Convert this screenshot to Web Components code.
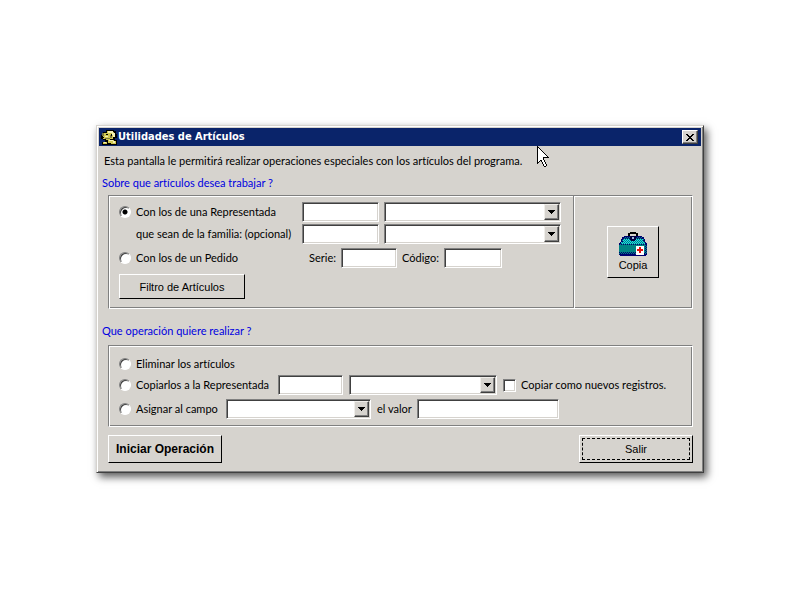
<!DOCTYPE html>
<html lang="es">
<head>
<meta charset="utf-8">
<title>Utilidades de Artículos</title>
<style>
    body {
        box-sizing: border-box;
        margin: 0;
        padding-bottom: 2px;
        min-height: 100vh;
        display: flex;
        align-items: center;
        justify-content: center;
        background: #fff;
        font: 11px/14px Lato, "DejaVu Sans Condensed", sans-serif;
        font-variant-ligatures: none;
        color: #000;
    }
</style>
</head>
<body>
<articulos-app></articulos-app>

<script>
function define (name, html, setup) {
    const template = document.createElement('template')
    template.innerHTML = html
    customElements.define(name, class extends HTMLElement {
        constructor () {
            super()
            this.attachShadow({ mode: 'open' })
            this.shadowRoot.appendChild(template.content.cloneNode(true))
        }

        connectedCallback () {
            if (setup) setup(this, this.shadowRoot)
        }
    })
}

define('win-window', `
    <style>
        :host {
            display: block;
            position: relative;
            box-sizing: border-box;
            width: 100%;
            max-width: 608px;
            background: #d6d3ce;
            border: 1px solid #d6d3ce;
            border-right-color: #404040;
            border-bottom-color: #404040;
            padding: 2px;
            box-shadow: inset 1px 1px #fff, inset -1px -1px #808080, 3px 4px 8px rgba(0, 0, 0, .65);
        }

        .title {
            display: flex;
            align-items: center;
            gap: 1px;
            height: 18px;
            padding: 0 3px 0 2px;
            background: #0a246a;
            color: #fff;
            font-family: "DejaVu Sans Condensed", "DejaVu Sans", sans-serif;
            font-weight: bold;
        }

        h1 {
            flex: 1;
            margin: 0;
            font-size: 11px;
        }

        .close {
            display: flex;
            align-items: center;
            justify-content: center;
            width: 16px;
            height: 14px;
            padding: 0;
            background: #d6d3ce;
            border: 1px solid #fff;
            border-right-color: #404040;
            border-bottom-color: #404040;
            box-shadow: inset -1px -1px #808080;
        }

        .body {
            padding: 8px 8px 7px 7px;
        }
    </style>
    <div class="title">
        <svg width="16" height="16" viewBox="0 0 16 16" shape-rendering="crispEdges" aria-hidden="true">
            <path fill="#000" d="M2 3h3v-2h8v1h2v3h1v4h-2v2h2v5h-15v-3h3v-2h-2v-1h-2v-4h2z"/>
            <path fill="#d0c850" d="M6 2h6v1h1v5h-1v2h-3v1h-4v-1h-3v-3h1v-3h3z"/>
            <path fill="#f4f0b8" d="M7 2h5v2h-5zM11 4h3v4h-2v-2h-1zM4 7h3v1h-3z"/>
            <path fill="#7c7840" d="M1 4h2v3h-2zM9 6h2v3h-2zM4 9h5v1h-5z"/>
            <path fill="#000" d="M5 5h2v1h-2zM1 8h2v1h-2zM10 5h1v2h-1z"/>
            <path fill="#d0c850" d="M7 11h6v1h2v3h-5v-1h-3zM2 13h4v2h-4z"/>
            <path fill="#f4f0b8" d="M8 11h4v1h-4zM12 12h2v2h-2zM3 13h2v1h-2z"/>
        </svg>
        <h1><slot name="title"></slot></h1>
        <button class="close" aria-label="Cerrar">
            <svg width="8" height="7" viewBox="0 0 8 7" shape-rendering="crispEdges">
                <path d="M0 0h2v1h1v1h2v-1h1v-1h2v1h-1v1h-1v1h-1v1h1v1h1v1h1v1h-2v-1h-1v-1h-2v1h-1v1h-2v-1h1v-1h1v-1h1v-1h-1v-1h-1v-1h-1z"/>
            </svg>
        </button>
    </div>
    <div class="body"><slot></slot></div>
`)

define('win-panel', `
    <style>
        :host {
            display: flex;
            border: 1px solid #808080;
            border-right-color: #fff;
            border-bottom-color: #fff;
            box-shadow: inset 1px 1px #fff, inset -1px -1px #808080;
        }
    </style>
    <slot></slot>
`, host => {
    // each radio lives in its own shadow root, so the panel keeps them exclusive
    host.addEventListener('pick', event => {
        host.querySelectorAll('win-radio').forEach(radio => {
            if (radio !== event.target) radio.shadowRoot.querySelector('input').checked = false
        })
    })
})

define('win-radio', `
    <style>
        :host {
            display: block;
        }

        label {
            display: flex;
            align-items: center;
            gap: 5px;
            white-space: nowrap;
        }

        input {
            appearance: none;
            box-sizing: border-box;
            flex: none;
            width: 12px;
            height: 12px;
            margin: 0;
            border: 1px solid;
            border-color: #808080 #fff #fff #808080;
            border-radius: 50%;
            background: #fff;
            box-shadow: inset 1px 1px #404040;
        }

        input:checked {
            background: radial-gradient(circle at 50% 50%, #000 2px, #fff 3px);
        }
    </style>
    <label><input type="radio"><span><slot></slot></span></label>
`, (host, root) => {
    const input = root.querySelector('input')
    input.checked = host.hasAttribute('checked')
    input.addEventListener('change', () => {
        host.dispatchEvent(new Event('pick', { bubbles: true, composed: true }))
    })
})

define('win-check', `
    <style>
        :host {
            display: block;
        }

        label {
            display: flex;
            align-items: center;
            gap: 5px;
            white-space: nowrap;
        }

        input {
            appearance: none;
            box-sizing: border-box;
            flex: none;
            width: 13px;
            height: 13px;
            margin: 0;
            border: 1px solid;
            border-color: #808080 #fff #fff #808080;
            background: #fff;
            box-shadow: inset 1px 1px #404040, inset -1px -1px #d6d3ce;
        }

        input:checked {
            background: linear-gradient(#000, #000) center / 5px 5px no-repeat #fff;
        }
    </style>
    <label><input type="checkbox"><span><slot></slot></span></label>
`)

define('win-field', `
    <style>
        :host {
            display: block;
        }

        label {
            display: flex;
            align-items: center;
            gap: 5px;
            white-space: nowrap;
        }

        input {
            box-sizing: border-box;
            flex: 1;
            min-width: 0;
            height: 20px;
            margin: 0;
            padding: 2px 4px;
            border: 1px solid;
            border-color: #808080 #fff #fff #808080;
            border-radius: 0;
            background: #fff;
            box-shadow: inset 1px 1px #404040, inset -1px -1px #d6d3ce;
            font: inherit;
            outline: none;
        }
    </style>
    <label><slot></slot><input type="text"></label>
`, (host, root) => {
    if (host.hasAttribute('name')) root.querySelector('input').setAttribute('aria-label', host.getAttribute('name'))
})

define('win-combo', `
    <style>
        :host {
            display: block;
            position: relative;
        }

        select {
            appearance: none;
            display: block;
            box-sizing: border-box;
            width: 100%;
            height: 20px;
            margin: 0;
            padding: 2px 18px 2px 4px;
            border: 1px solid;
            border-color: #808080 #fff #fff #808080;
            border-radius: 0;
            background: #fff;
            box-shadow: inset 1px 1px #404040, inset -1px -1px #d6d3ce;
            font: inherit;
            outline: none;
        }

        .arrow {
            position: absolute;
            top: 2px;
            right: 2px;
            bottom: 2px;
            width: 15px;
            box-sizing: border-box;
            display: flex;
            align-items: center;
            justify-content: center;
            background: #d6d3ce;
            border: 1px solid #f0eeea;
            border-right-color: #404040;
            border-bottom-color: #404040;
            box-shadow: inset -1px -1px #808080;
            pointer-events: none;
        }
    </style>
    <select><option></option></select>
    <span class="arrow">
        <svg width="7" height="4" viewBox="0 0 7 4" shape-rendering="crispEdges"><path d="M0 0h7v1h-1v1h-1v1h-1v1h-1v-1h-1v-1h-1v-1h-1z"/></svg>
    </span>
`, (host, root) => {
    root.querySelector('select').setAttribute('aria-label', host.getAttribute('name'))
})

define('win-button', `
    <style>
        :host {
            display: block;
            font-family: "Liberation Sans", Arial, sans-serif;
        }

        button {
            display: flex;
            flex-direction: column;
            align-items: center;
            justify-content: center;
            gap: 2px;
            box-sizing: border-box;
            width: 100%;
            height: var(--button-height, 28px);
            margin: 0;
            padding: 2px;
            background: #d6d3ce;
            border: 1px solid #fff;
            border-right-color: #000;
            border-bottom-color: #000;
            color: inherit;
            font: inherit;
        }

        button:active {
            border-color: #000 #fff #fff #000;
        }

        :host([focused]) button {
            outline: 1px dashed #000;
            outline-offset: -4px;
        }
    </style>
    <button><slot></slot></button>
`)

define('first-aid-icon', `
    <style>
        :host {
            display: block;
            height: 24px;
        }
    </style>
    <svg width="28" height="24" viewBox="0 0 28 24" shape-rendering="crispEdges" aria-hidden="true">
        <defs>
            <pattern id="dots" width="2" height="2" patternUnits="userSpaceOnUse">
                <path fill="#008484" d="M0 0h2v2h-2z"/>
                <path fill="#20d8e8" d="M0 0h1v1h-1zM1 1h1v1h-1z"/>
            </pattern>
            <pattern id="dark" width="2" height="2" patternUnits="userSpaceOnUse">
                <path fill="#008484" d="M0 0h2v2h-2z"/>
                <path fill="#000070" d="M0 0h1v1h-1zM1 1h1v1h-1z"/>
            </pattern>
        </defs>
        <path fill="#000" d="M11 0h6v1h2v4h-2v-3h-6v3h-2v-4h2z"/>
        <path fill="#000070" d="M5 4h18v1h2v2h1v3h1v1h1v12h-1v1h-26v-1h-1v-12h1v-1h1v-3h1v-2h2z"/>
        <path fill="url(#dark)" d="M5 5h18v2h2v3h-22v-3h2z"/>
        <path fill="url(#dots)" d="M4 7h20v3h2v2h-24v-2h2z"/>
        <path fill="url(#dark)" d="M1 12h26v2h-26z"/>
        <path fill="#008484" d="M0 13h28v8h-28z"/>
        <path fill="url(#dark)" d="M26 13h2v9h-2zM0 20h26v2h-26z"/>
        <path fill="#000040" d="M11 4h6v4h-1v1h-4v-1h-1z"/>
        <path fill="#a0b8e0" d="M13 5h2v2h-2z"/>
        <path fill="#fff" d="M17 14h8v9h-8z"/>
        <path fill="#e01010" d="M20 15h2v2h2v2h-2v2h-2v-2h-2v-2h2z"/>
    </svg>
`)

define('mouse-pointer', `
    <style>
        :host {
            display: block;
            position: absolute;
            left: 440px;
            top: 20px;
        }

        svg {
            display: block;
        }
    </style>
    <svg width="12" height="21" viewBox="0 0 12 21" shape-rendering="crispEdges" aria-hidden="true">
        <path d="M0 0h1v1h1v1h1v1h1v1h1v1h1v1h1v1h1v1h1v1h1v1h1v1h1v1h-5v2h1v2h1v2h1v2h-1v1h-2v-1h-1v-2h-1v-2h-1v-1h-1v1h-1v1h-1v1h-2z"/>
        <path fill="#fff" d="M1 2h1v1h1v1h1v1h1v1h1v1h1v1h1v1h1v1h1v1h-4v3h1v2h1v2h1v2h-2v-2h-1v-2h-1v-2h-2v1h-1v1h-1z"/>
    </svg>
`)

define('articulos-app', `
    <style>
        :host {
            display: flex;
            justify-content: center;
            width: 100%;
        }

        p, h2 {
            margin: 0;
            font-size: 11px;
            font-weight: normal;
        }

        h2 {
            color: #0000e0;
        }

        h2.first {
            margin: 8px 0 5px -4px;
        }

        h2.second {
            margin: 15px 0 7px -4px;
        }

        .intro {
            margin-left: -2px;
        }

        win-panel {
            margin-left: 2px;
        }

        .source {
            flex: 1;
            display: grid;
            grid-template-columns: 178px auto 1fr;
            column-gap: 5px;
            row-gap: 2px;
            align-items: center;
            padding: 6px 12px 9px 10px;
        }

        .family {
            padding-left: 17px;
            white-space: nowrap;
        }

        .order {
            grid-column: 1 / -1;
            display: flex;
            align-items: center;
            gap: 5px;
            margin-top: 2px;
        }

        .order win-radio {
            flex: 0 0 185px;
        }

        .serie {
            width: 88px;
        }

        .codigo {
            width: 100px;
        }

        .filter {
            grid-column: 1 / -1;
            width: 126px;
            margin-top: 4px;
            --button-height: 25px;
        }

        .copy {
            display: flex;
            align-items: center;
            justify-content: center;
            width: 118px;
            border-left: 1px solid #808080;
            box-shadow: inset 1px 0 #fff;
        }

        .copy win-button {
            width: 52px;
            --button-height: 52px;
        }

        .actions {
            display: flex;
            flex-direction: column;
            gap: 4px;
            flex: 1;
            padding: 11px 10px 7px;
        }

        .row {
            display: flex;
            align-items: center;
            gap: 6px;
        }

        .code {
            width: 77px;
        }

        .copy-radio {
            width: 153px;
        }

        .target {
            width: 65px;
        }

        .wide {
            width: 148px;
        }

        .field-radio {
            width: 101px;
        }

        .column {
            width: 145px;
        }

        .value {
            width: 182px;
        }

        footer {
            display: flex;
            justify-content: space-between;
            margin: 8px 0 0 2px;
        }

        footer win-button {
            width: 114px;
        }

        .start {
            font-size: 12px;
            font-weight: bold;
        }
    </style>
    <win-window>
        <span slot="title">Utilidades de Artículos</span>
        <p class="intro">Esta pantalla le permitirá realizar operaciones especiales con los artículos del programa.</p>
        <h2 class="first">Sobre que artículos desea trabajar ?</h2>
        <win-panel>
            <div class="source">
                <win-radio checked>Con los de una Representada</win-radio>
                <win-field class="code" name="Representada"></win-field>
                <win-combo name="Nombre de la representada"></win-combo>
                <span class="family">que sean de la familia: (opcional)</span>
                <win-field class="code" name="Familia"></win-field>
                <win-combo name="Nombre de la familia"></win-combo>
                <div class="order">
                    <win-radio>Con los de un Pedido</win-radio>
                    <win-field class="serie">Serie:</win-field>
                    <win-field class="codigo">Código:</win-field>
                </div>
                <win-button class="filter">Filtro de Artículos</win-button>
            </div>
            <div class="copy">
                <win-button><first-aid-icon></first-aid-icon>Copia</win-button>
            </div>
        </win-panel>
        <h2 class="second">Que operación quiere realizar ?</h2>
        <win-panel>
            <div class="actions">
                <win-radio>Eliminar los artículos</win-radio>
                <div class="row">
                    <win-radio class="copy-radio">Copiarlos a la Representada</win-radio>
                    <win-field class="target" name="Código de la representada"></win-field>
                    <win-combo class="wide" name="Representada de destino"></win-combo>
                    <win-check>Copiar como nuevos registros.</win-check>
                </div>
                <div class="row">
                    <win-radio class="field-radio">Asignar al campo</win-radio>
                    <win-combo class="column" name="Campo"></win-combo>
                    <win-field class="value">el valor</win-field>
                </div>
            </div>
        </win-panel>
        <footer>
            <win-button class="start">Iniciar Operación</win-button>
            <win-button focused>Salir</win-button>
        </footer>
        <mouse-pointer></mouse-pointer>
    </win-window>
`)
</script>
</body>
</html>
